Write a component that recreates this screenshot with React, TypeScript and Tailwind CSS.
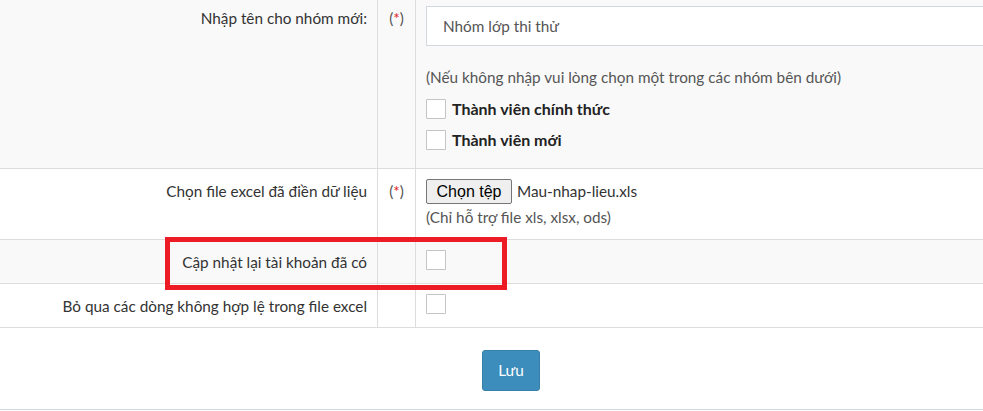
import React from "react";

function Box() {
  return <div className="h-[20px] w-[20px] shrink-0 border border-[#c4c4c4] bg-white rounded-[1px]" />;
}

function Req() {
  return (
    <span className="text-[#555]">
      (<span className="text-[#e02020]">*</span>)
    </span>
  );
}

export default function App() {
  return (
    <div
      className="relative w-[983px] h-[411px] overflow-hidden bg-white text-[15.3px] text-[#333]"
      style={{ fontFamily: "Lato, 'Noto Sans', sans-serif" }}
    >
      {/* Row 1 */}
      <div className="flex h-[169px] border-b border-[#dddddd] bg-[#f9f9f9]">
        <div className="w-[378px] shrink-0 border-r border-[#dddddd] pt-[8px] pr-[10px] text-right leading-[20px]">
          Nhập tên cho nhóm mới:
        </div>
        <div className="w-[38px] shrink-0 border-r border-[#dddddd] pt-[8px] text-center leading-[20px]">
          <Req />
        </div>
        <div className="flex-1 pl-[10px] pt-[6px]">
          <div className="flex h-[40px] w-[620px] items-center border border-[#d2d6de] bg-white pl-[16px] text-[#555]">
            Nhóm lớp thi thử
          </div>
          <div className="mt-[21px] text-[15.3px] leading-[20px] text-[#555]">
            (Nếu không nhập vui lòng chọn một trong các nhóm bên dưới)
          </div>
          <div className="mt-[12px] flex items-center gap-[6px]">
            <Box />
            <span className="text-[16px] font-bold leading-[20px] text-[#222]">Thành viên chính thức</span>
          </div>
          <div className="mt-[11px] flex items-center gap-[6px]">
            <Box />
            <span className="text-[16px] font-bold leading-[20px] text-[#222]">Thành viên mới</span>
          </div>
        </div>
      </div>

      {/* Row 2 */}
      <div className="flex h-[71px] border-b border-[#dddddd] bg-white">
        <div className="w-[378px] shrink-0 border-r border-[#dddddd] pt-[12px] pr-[10px] text-right leading-[20px]">
          Chọn file excel đã điền dữ liệu
        </div>
        <div className="w-[38px] shrink-0 border-r border-[#dddddd] pt-[12px] text-center leading-[20px]">
          <Req />
        </div>
        <div className="flex-1 pl-[10px] pt-[10px]">
          <div className="flex items-center">
            <div
              className="flex h-[25px] w-[86px] items-center justify-center rounded-[2px] border border-[#767676] bg-[#efefef] text-[16px] text-black"
              style={{ fontFamily: "'Liberation Sans', Arial, sans-serif" }}
            >
              Chọn tệp
            </div>
            <span className="ml-[5px] text-[#333]">Mau-nhap-lieu.xls</span>
          </div>
          <div className="mt-[3px] leading-[20px] text-[#555]">(Chỉ hỗ trợ file xls, xlsx, ods)</div>
        </div>
      </div>

      {/* Row 3 */}
      <div className="flex h-[44px] border-b border-[#dddddd] bg-[#f9f9f9]">
        <div className="w-[378px] shrink-0 border-r border-[#dddddd] pt-[12px] pr-[10px] text-right leading-[20px]">
          Cập nhật lại tài khoản đã có
        </div>
        <div className="w-[38px] shrink-0 border-r border-[#dddddd]" />
        <div className="flex-1 pl-[10px] pt-[10px]">
          <Box />
        </div>
      </div>

      {/* Row 4 */}
      <div className="flex h-[44px] border-b border-[#dddddd] bg-white">
        <div className="w-[378px] shrink-0 border-r border-[#dddddd] pt-[12px] pr-[10px] text-right leading-[20px]">
          Bỏ qua các dòng không hợp lệ trong file excel
        </div>
        <div className="w-[38px] shrink-0 border-r border-[#dddddd]" />
        <div className="flex-1 pl-[10px] pt-[10px]">
          <Box />
        </div>
      </div>

      {/* Footer */}
      <div className="flex h-[82px] border-b border-[#d2d6de] pl-[482px] pt-[22px]">
        <button className="h-[41px] w-[58px] rounded-[3px] border border-[#367fa9] bg-[#3c8dbc] text-white">
          Lưu
        </button>
      </div>

      {/* Annotation */}
      <div className="absolute left-[165px] top-[237px] h-[53px] w-[342px] border-[5px] border-[#ed1c24]" />
    </div>
  );
}
